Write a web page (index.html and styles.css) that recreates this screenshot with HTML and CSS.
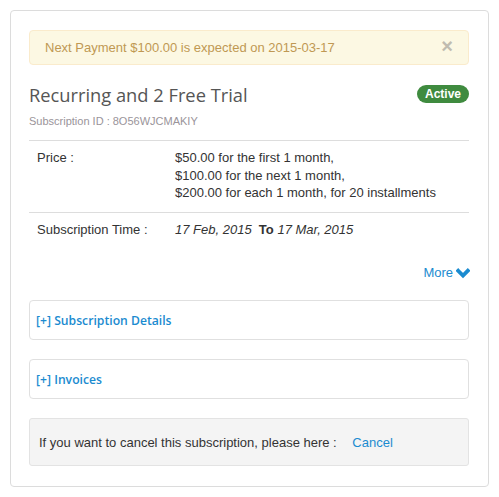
FILE: index.html
```html
<!DOCTYPE html>
<html>
<head>
<meta charset="utf-8">
<link rel="stylesheet" href="styles.css">
</head>
<body>
<div class="card">
  <div class="alert">
    <span>Next Payment $100.00 is expected on 2015-03-17</span>
    <span class="close">&times;</span>
  </div>
  <div class="title-row">
    <h2 class="title">Recurring and 2 Free Trial</h2>
    <span class="badge">Active</span>
  </div>
  <div class="sub-id">Subscription ID : 8O56WJCMAKIY</div>
  <div class="table">
    <div class="row">
      <div class="label">Price :</div>
      <div class="value">$50.00 for the first 1 month,<br>$100.00 for the next 1 month,<br>$200.00 for each 1 month, for 20 installments</div>
    </div>
    <div class="row">
      <div class="label">Subscription Time :</div>
      <div class="value"><i>17 Feb, 2015</i> &nbsp;<b>To</b> <i>17 Mar, 2015</i></div>
    </div>
  </div>
  <div class="more-row">
    <a class="more">More <svg class="chev" width="14" height="11" viewBox="0 0 14 11"><polyline points="2.2,2.8 7,7.6 11.8,2.8" fill="none" stroke="#1b8bd0" stroke-width="3.8" stroke-linecap="square"/></svg></a>
  </div>
  <div class="panel"><a class="panel-link">[+] Subscription Details</a></div>
  <div class="panel"><a class="panel-link">[+] Invoices</a></div>
  <div class="well">If you want to cancel this subscription, please here : <a class="cancel">Cancel</a></div>
</div>
</body>
</html>
```
FILE: styles.css
```css
body {
  margin: 0;
  font-family: "Liberation Sans", Arial, sans-serif;
  font-size: 13px;
  color: #333;
  background: #fff;
}
.card {
  margin: 10px 0 0 10px;
  width: 440px;
  padding: 19px 19px 20px 18px;
  border: 1px solid #dcdcdc;
  border-radius: 4px;
}
.alert {
  display: flex;
  justify-content: space-between;
  align-items: center;
  height: 33px;
  padding: 0 15px 0 15px;
  background: #fcf8e3;
  border: 1px solid #faebcc;
  border-radius: 4px;
  color: #c09853;
}
.close {
  font-size: 20px;
  font-weight: bold;
  color: #c0bcb0;
  line-height: 1;
  margin-top: -3px;
}
.title-row {
  display: flex;
  justify-content: space-between;
  align-items: center;
  margin-top: 17px;
}
.title {
  margin: 0;
  font-family: "Open Sans", sans-serif;
  font-weight: normal;
  font-size: 18.3px;
  line-height: 26px;
  color: #555;
}
.badge {
  background: #3f8b3f;
  color: #fff;
  font-weight: bold;
  font-size: 12px;
  height: 18px;
  line-height: 18px;
  padding: 0 8px;
  border-radius: 9px;
  margin-top: -3px;
}
.sub-id {
  font-size: 11px;
  color: #9a949a;
  margin-top: 6px;
  line-height: 14px;
}
.table {
  margin-top: 12px;
  border-top: 1px solid #ddd;
}
.row {
  display: flex;
  padding: 8px 8px 10px 8px;
  line-height: 17.5px;
}
.row + .row {
  border-top: 1px solid #ddd;
}
.label {
  width: 138px;
}
.more-row {
  display: flex;
  justify-content: flex-end;
  margin-top: 17px;
}
.more {
  color: #1b8bd0;
  display: flex;
  align-items: center;
  gap: 3px;
  line-height: 16px;
}
.chev {
  display: block;
  margin-right: -1px;
}
.panel {
  margin-top: 19px;
  height: 38px;
  display: flex;
  align-items: center;
  padding: 0 6px;
  border: 1px solid #e0e0e0;
  border-radius: 4px;
}
.panel + .panel {
  margin-top: 19px;
}
.panel-link {
  font-family: "Open Sans", sans-serif;
  font-weight: 600;
  font-size: 12.2px;
  color: #1b8bd0;
}
.well {
  margin-top: 19px;
  height: 46px;
  display: flex;
  align-items: center;
  padding: 0 9px;
  background: #f4f4f4;
  border: 1px solid #e3e3e3;
  border-radius: 3px;
  white-space: pre;
}
.cancel {
  color: #1b8bd0;
  margin-left: 12px;
}
```
